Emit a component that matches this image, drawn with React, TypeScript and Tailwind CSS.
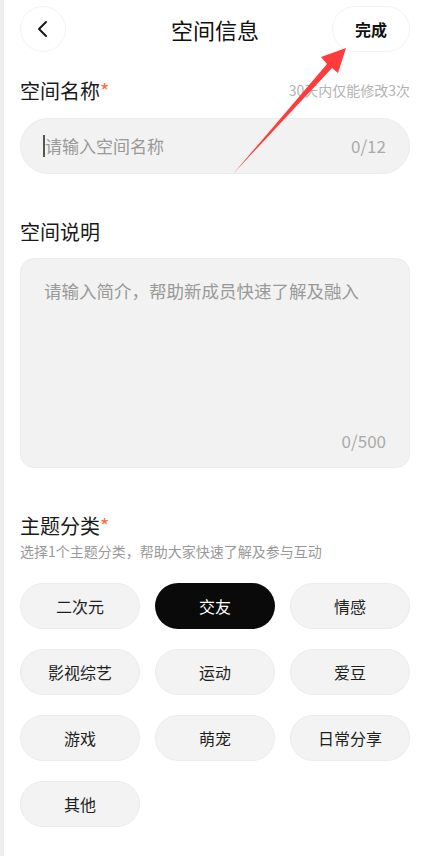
import React, { useState } from "react";

const topics = ["二次元", "交友", "情感", "影视综艺", "运动", "爱豆", "游戏", "萌宠", "日常分享", "其他"];

const App = () => {
  const [selected, setSelected] = useState("交友");

  return (
    <div
      className="relative flex min-h-[856px] w-full bg-white"
      style={{ fontFamily: '"Noto Sans CJK SC", "Noto Sans", sans-serif' }}
    >
      <div className="w-[4px] shrink-0 bg-[#eeeeee]" />
      <div className="flex flex-1 flex-col pl-[16px] pr-[13px]">
        {/* header */}
        <div className="mt-[6px] flex h-[46px] items-center">
          <div className="flex flex-1">
            <button className="flex h-[46px] w-[46px] items-center justify-center rounded-full border border-[#f3f3f3] bg-white">
              <svg width="14" height="18" viewBox="0 0 14 18" fill="none">
                <path d="M10 2 L3 9 L10 16" stroke="#1a1a1a" strokeWidth="2" strokeLinecap="round" strokeLinejoin="round" />
              </svg>
            </button>
          </div>
          <h1 className="text-[22px] font-normal text-[#111111]">空间信息</h1>
          <div className="flex flex-1 justify-end">
            <button className="flex h-[46px] w-[78px] items-center justify-center rounded-full border border-[#f3f3f3] bg-white text-[16px] font-bold text-[#111111]">
              完成
            </button>
          </div>
        </div>

        {/* name */}
        <div className="mt-[25px] flex items-center justify-between">
          <div className="text-[20px] leading-[27px] text-[#1a1a1a]">
            空间名称<span className="text-[#ff6b3d]">*</span>
          </div>
          <div className="text-[14px] text-[#b3b3b3]">30天内仅能修改3次</div>
        </div>
        <div className="mt-[14px] flex h-[56px] items-center rounded-full border border-[#ececec] bg-[#f2f2f2] pl-[22px] pr-[23px]">
          <span className="h-[22px] w-[2px] bg-[#555555]" />
          <span className="flex-1 text-[17px] text-[#999999]">请输入空间名称</span>
          <span className="text-[17px] text-[#aaaaaa]">0/12</span>
        </div>

        {/* description */}
        <div className="mt-[44px] text-[20px] leading-[27px] text-[#1a1a1a]">空间说明</div>
        <div className="mt-[13px] flex h-[210px] flex-col justify-between rounded-[14px] border border-[#ececec] bg-[#f2f2f2] pl-[23px] pr-[23px] pt-[20px] pb-[14px]">
          <div className="text-[17.5px] leading-[24px] text-[#999999]">请输入简介，帮助新成员快速了解及融入</div>
          <div className="text-right text-[17px] leading-[24px] text-[#aaaaaa]">0/500</div>
        </div>

        {/* topics */}
        <div className="mt-[44px] text-[20px] leading-[27px] text-[#1a1a1a]">
          主题分类<span className="text-[#ff6b3d]">*</span>
        </div>
        <div className="mt-[2px] text-[14px] leading-[20px] text-[#999999]">选择1个主题分类，帮助大家快速了解及参与互动</div>
        <div className="mt-[22px] grid grid-cols-3 gap-x-[15px] gap-y-[20px]">
          {topics.map((t) => (
            <button
              key={t}
              onClick={() => setSelected(t)}
              className={
                t === selected
                  ? "flex h-[46px] items-center justify-center rounded-full bg-[#0a0a0a] text-[16px] text-white"
                  : "flex h-[46px] items-center justify-center rounded-full border border-[#ececec] bg-[#f3f3f3] text-[16px] text-[#1f1f1f]"
              }
            >
              {t}
            </button>
          ))}
        </div>
      </div>

      {/* annotation arrow */}
      <svg className="pointer-events-none absolute left-0 top-0" width="423" height="200" viewBox="0 0 423 200">
        <polygon points="233,174 327,64 321,57 346,48 338,73 332,68" fill="#ff3b3b" />
      </svg>
    </div>
  );
};

export default App;
